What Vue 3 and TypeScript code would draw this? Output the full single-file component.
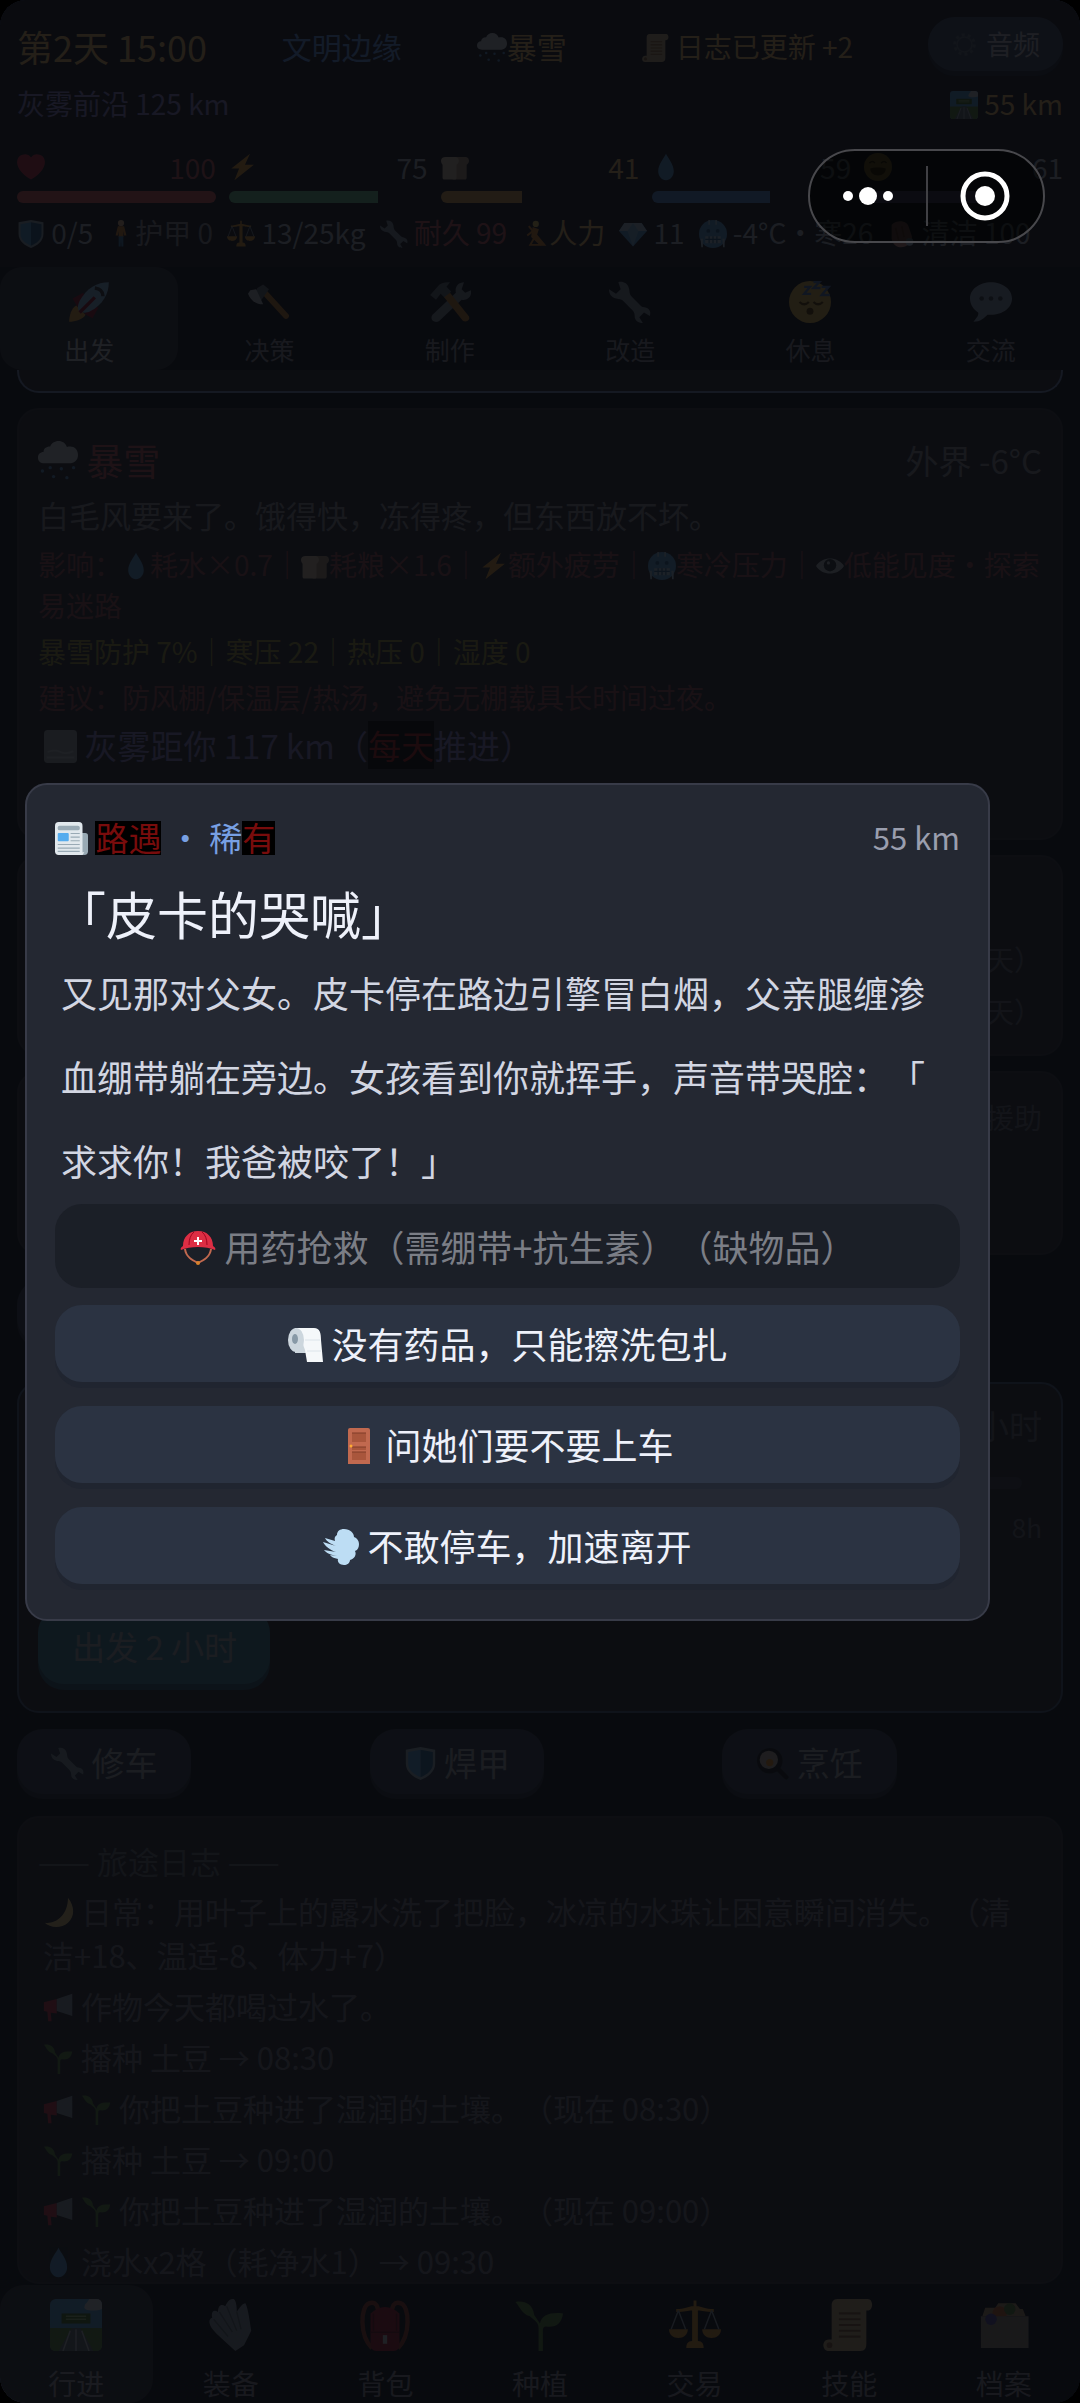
<script setup lang="ts">
import { ref } from 'vue'

interface Stat { icon: string; value: number; color: string; tone: string }
interface Info { icon: string; text: string; tone: string }
interface Tab { icon: string; label: string }
interface LogLine { icons: string[]; text: string }
interface Choice { icon: string; text: string; disabled?: boolean }

const stats: Stat[] = [
  { icon: 'heart', value: 100, color: '#f8645e', tone: 'red' },
  { icon: 'bolt', value: 75, color: '#78dc9c', tone: 'soft' },
  { icon: 'bread', value: 41, color: '#f5b455', tone: 'gold' },
  { icon: 'drop', value: 59, color: '#5aa0f0', tone: 'soft' },
  { icon: 'smile', value: 61, color: '#9a86d8', tone: 'soft' },
]

const infos: Info[] = [
  { icon: 'shield', text: ' 0/5', tone: 'soft' },
  { icon: 'person', text: '护甲 0', tone: 'dim' },
  { icon: 'scales', text: ' 13/25kg', tone: 'soft' },
  { icon: 'wrench', text: ' 耐久 99', tone: 'red' },
  { icon: 'rower', text: '人力', tone: 'gold' },
  { icon: 'gem', text: ' 11', tone: 'soft' },
  { icon: 'cold', text: ' -4°C・寒26', tone: 'soft' },
  { icon: 'soap', text: ' 清洁 100', tone: 'soft' },
]

const actions: Tab[] = [
  { icon: 'rocket', label: '出发' },
  { icon: 'axe', label: '决策' },
  { icon: 'tools', label: '制作' },
  { icon: 'wrench', label: '改造' },
  { icon: 'sleep', label: '休息' },
  { icon: 'speech', label: '交流' },
]

const tabs: Tab[] = [
  { icon: 'road', label: '行进' },
  { icon: 'gloves', label: '装备' },
  { icon: 'backpack', label: '背包' },
  { icon: 'seedling', label: '种植' },
  { icon: 'scales', label: '交易' },
  { icon: 'scroll', label: '技能' },
  { icon: 'folder', label: '档案' },
]

const works: Tab[] = [
  { icon: 'wrench', label: '修车' },
  { icon: 'shield', label: '焊甲' },
  { icon: 'cooking', label: '烹饪' },
]

const logs: LogLine[] = [
  { icons: ['moon'], text: '日常：用叶子上的露水洗了把脸，冰凉的水珠让困意瞬间消失。（清洁+18、温适-8、体力+7）' },
  { icons: ['horn'], text: '作物今天都喝过水了。' },
  { icons: ['seedling'], text: '播种 土豆 → 08:30' },
  { icons: ['horn', 'seedling'], text: '你把土豆种进了湿润的土壤。（现在 08:30）' },
  { icons: ['seedling'], text: '播种 土豆 → 09:00' },
  { icons: ['horn', 'seedling'], text: '你把土豆种进了湿润的土壤。（现在 09:00）' },
  { icons: ['drop'], text: '浇水x2格（耗净水1）→ 09:30' },
]

const choices: Choice[] = [
  { icon: 'helmet', text: '用药抢救（需绷带+抗生素）（缺物品）', disabled: true },
  { icon: 'roll', text: '没有药品，只能擦洗包扎' },
  { icon: 'door', text: '问她们要不要上车' },
  { icon: 'dash', text: '不敢停车，加速离开' },
]

const action = ref(0)
const tab = ref(0)
const hours = ref(2)
</script>

<template>
  <svg class="defs" aria-hidden="true">
    <symbol id="heart" viewBox="0 0 36 36"><path fill="#dd2e44" d="M35.9 11.8A9.9 9.9 0 0 0 18 5.700A9.900 9.900 0 0 0 .1 11.800c0 8.700 9 17.500 17.900 22.200 8.900-4.700 17.900-13.500 17.900-22.200z"/></symbol>
    <symbol id="bolt" viewBox="0 0 36 36"><path fill="#ffac33" d="M27 1 3 20h10L7 35l25-20H20.500z"/></symbol>
    <symbol id="bread" viewBox="0 0 36 36"><path fill="#c0a080" d="M5 5h26c4 0 5 3 5 5s-1 4-3 5v17c0 1-1 2-2 2H15V5z"/><path fill="#f0d8b8" d="M6 5h12c4 0 5 3 5 5s-1 4-3 5v17c0 1-1 2-2 2H4c-1 0-2-1-2-2V15c-1-1-2-3-2-5 0-3 2-5 6-5z"/></symbol>
    <symbol id="drop" viewBox="0 0 36 36"><path fill="#5dadec" d="M28 23.500C28 30 23.500 35 18 35S8 30 8 23.500C8 14 16 6 18 1c2 5 10 13 10 22.500z"/></symbol>
    <symbol id="smile" viewBox="0 0 36 36"><circle cx="18" cy="18" r="18" fill="#ffcc4d"/><path fill="#664500" d="M8 20c2-2 18-2 20 0 0 5-4 9-10 9S8 25 8 20z"/><path d="M7 13q4-4 7 0M22 13q4-4 7 0" fill="none" stroke="#664500" stroke-width="2"/></symbol>
    <symbol id="shield" viewBox="0 0 36 36"><path fill="#a9bccb" d="M18 0 2 3v15c0 9 8 15 16 18 8-3 16-9 16-18V3z"/><path fill="#55acee" d="M18 3 4.500 5.500V18c0 7 6 12 13.500 15z"/><path fill="#226699" d="M18 3l13.500 2.500V18c0 7-6 12-13.500 15z"/></symbol>
    <symbol id="person" viewBox="0 0 36 36"><circle cx="18" cy="4" r="4" fill="#ffcc99"/><path fill="#f4902a" d="M14 8h8l3 12h-3l-1-6v8h-6v-8l-1 6h-3z"/><path fill="#4289c1" d="M15 21h6v13h-2.500l-.5-9-.5 9H15z"/></symbol>
    <symbol id="scales" viewBox="0 0 36 36"><path fill="#ffac33" d="M17 1h2v4c4 0 6 2 12 2v2c-6 0-8-1-11-1v21c3 0 4 2 4 5H12c0-3 1-5 4-5V8c-3 0-5 1-11 1V7c6 0 8-2 12-2zM0 21h13c0 4-3 6-6.500 6S0 25 0 21zm23 0h13c0 4-3 6-6.500 6S23 25 23 21z"/><path d="m6.500 8-5 13m5-13 5 13m18-13-5 13m5-13 5 13" stroke="#9db2c2" fill="none"/></symbol>
    <symbol id="wrench" viewBox="0 0 36 36"><path fill="#8899a6" d="M8 1c4-1 8 1 9 5 1 3 0 5 3 8l7 7c2 2 3 1 5 2 3 1 4 4 3 7l-5-3-4 4 3 5c-4 0-7-2-7-6 0-3-1-4-3-6l-7-7c-2-2-3-1-6-2-4-1-6-4-6-8l6 4 4-4z"/></symbol>
    <symbol id="rower" viewBox="0 0 36 36"><circle cx="19" cy="5" r="4" fill="#ffdc5d"/><path fill="#f4902a" d="m15 9 8 3-3 9 8 9-3 3-12-11z"/><path d="m17 13-9 7M10 8l20 24H12l5-9" fill="none" stroke="#f4902a" stroke-width="2.500"/></symbol>
    <symbol id="gem" viewBox="0 0 36 36"><path fill="#5dadec" d="M7 4h22l7 10-18 20L0 14z"/><path fill="#bdddf4" d="M7 4h22l7 10H0z"/><path fill="#8ccaf7" d="m18 4-7 10 7 20 7-20z"/></symbol>
    <symbol id="cold" viewBox="0 0 36 36"><circle cx="18" cy="18" r="18" fill="#5dadec"/><path fill="#bdddf4" d="M8 21h20v9H8zM2 24h3v11H3zm28 0h3v11h-2zM12 0h2v6h-2zm9 0h2v6h-2z"/><path d="M8 25h20M13 21v9m5-9v9m5-9v9" stroke="#226699" stroke-width="1.500"/><circle cx="12" cy="14" r="2.500" fill="#226699"/><circle cx="24" cy="14" r="2.500" fill="#226699"/></symbol>
    <symbol id="soap" viewBox="0 0 36 36"><path fill="#e89a8a" d="M6 6c8-7 20-5 22 3l4 12c1 8-6 14-14 14-6 0-11-4-12-11z"/><path d="m11 10 4 16m4-18 3 14" stroke="#c1694f" stroke-width="2"/><circle cx="29" cy="28" r="5" fill="#bdddf4"/></symbol>
    <symbol id="snow" viewBox="0 0 36 36"><path fill="#e1e8ed" d="M29 5c-1 0-2 0-3 .5C25 2 22 0 18.500 0 15 0 12 2 11 5 7 5 5 7 5 10c-3 0-5 2-5 5s2 5 6 5h22c5 0 8-3 8-7.500S33 5 29 5z"/><g fill="#5a9fe0"><circle cx="4" cy="27" r="1.500"/><circle cx="11" cy="24" r="1.500"/><circle cx="14" cy="32" r="1.500"/><circle cx="21" cy="25" r="1.500"/><circle cx="26" cy="33" r="1.500"/><circle cx="32" cy="24" r="1.500"/></g></symbol>
    <symbol id="scroll" viewBox="0 0 36 36"><path fill="#e0c48a" d="M10 0h21c4 0 4 8 0 8h-1v23c0 3-1 5-4 5H4c-5 0-5-8 0-8h2V5c0-3 1-5 4-5z"/><path d="M11 10h15M11 14h15m-15 4h15m-15 4h15m-15 4h15" stroke="#9a6a3a" stroke-width="1.500"/><circle cx="4.500" cy="32" r="2" fill="#9a6a3a"/></symbol>
    <symbol id="gear" viewBox="0 0 36 36"><circle cx="18" cy="18" r="13" fill="none" stroke="#55626c" stroke-width="4" stroke-dasharray="4 4.160"/><circle cx="18" cy="18" r="10" fill="none" stroke="#55626c" stroke-width="2"/></symbol>
    <symbol id="road" viewBox="0 0 36 36"><rect width="36" height="36" rx="4" fill="#55acee"/><path fill="#5c913b" d="M0 20h36v12q0 4-4 4H4q-4 0-4-4z"/><path fill="#66757f" d="M15 20h6l9 16H6z"/><path d="M18 21v15M14 22 9 36m13-14 5 14" stroke="#ccd6dd"/><path fill="#3e721d" d="M8 10h20v7H8z"/><path d="M11 12h14M11 14h14" stroke="#a6d388"/><path fill="#e1e8ed" d="M27 0h5q4 0 4 4v3c-5 2-14 1-12-2 0-2 2-2 3-5z"/></symbol>
    <symbol id="rocket" viewBox="0 0 36 36"><path fill="#a0041e" d="m4 15 9-5 2 5-7 7zm17 17 5-9-5-2-7 7z"/><path fill="#ffac33" d="M7 21c-4 2-6 9-6 14 5 0 12-2 14-6z"/><path fill="#8cc8f4" d="M35 1C25 1 16 6 10 17c-2 4-2 8 0 9s5 2 9 0C30 20 35 11 35 1z"/><path fill="#a0041e" d="M22 13 9 26l2 2 13-13z"/><path d="M23 6q7 1 7 7" fill="none" stroke="#292f33" stroke-width="3"/></symbol>
    <symbol id="axe" viewBox="0 0 36 36"><path fill="#d98a2b" d="m15 7 20 22c1 2-2 5-4 3L11 10z"/><path fill="#66757f" d="m8 6 5-3 5 4-7 10-6-4z"/><path fill="#ccd6dd" d="M2 8 7 7l6 13c-7 0-11-4-13-9z"/></symbol>
    <symbol id="tools" viewBox="0 0 36 36"><path fill="#8899a6" d="m3 29 20-19c-1-5 2-9 7-9l-2 6 3 3 5-2c1 6-4 9-8 8L9 34c-4 3-9-1-6-5z"/><path fill="#66757f" d="M1 12 9 3c3-2 6-2 9-2l-3 4 4 4-5 6-4-4-4 5z"/><path fill="#d98a2b" d="m13 14 5-4 16 20c2 3-2 6-5 4z"/></symbol>
    <symbol id="sleep" viewBox="0 0 36 36"><circle cx="18" cy="18" r="18" fill="#ffcc4d"/><path d="M9 18q4 4 8 0m4 0q4 4 8 0" fill="none" stroke="#664500" stroke-width="2"/><circle cx="18" cy="26" r="3" fill="#664500"/><path d="M13 5h5l-5 6h6M21 1h5l-5 5h6M28 5h6l-6 7h7" stroke="#5580c8" stroke-width="2" fill="none"/></symbol>
    <symbol id="speech" viewBox="0 0 36 36"><path fill="#9ab0c8" d="M18 1C8 1 0 7 0 15c0 6 4 10 7 12 1 3-3 6-4 8 6 0 9-3 12-6h3c10 0 18-6 18-14S28 1 18 1z"/><g fill="#3a4654"><circle cx="10" cy="15" r="2"/><circle cx="18" cy="15" r="2"/><circle cx="26" cy="15" r="2"/></g></symbol>
    <symbol id="eye" viewBox="0 0 36 36"><path fill="#c8d0d6" d="M0 18C8 5 28 5 36 18c-8 13-28 13-36 0z"/><circle cx="18" cy="17" r="8" fill="#292f33"/><circle cx="16" cy="14" r="2" fill="#d0d8de"/></symbol>
    <symbol id="fog" viewBox="0 0 36 36"><rect width="36" height="36" rx="4" fill="#aab2b8"/><path d="M4 24q8-3 14 0t14-1M3 30h30" stroke="#ccd6dd" stroke-width="2" fill="none"/></symbol>
    <symbol id="news" viewBox="0 0 36 36"><path fill="#99aab5" d="M28 12h5q3 0 3 3v17q0 4-4 4h-4z"/><rect width="30" height="36" rx="4" fill="#e1e8ed"/><path fill="#e1e8ed" d="M4 33h28l-2 3H4z"/><rect x="3" y="4" width="24" height="5" rx="2" fill="#99aab5"/><rect x="3" y="12" width="12" height="9" rx="1" fill="#55acee"/><path d="M17 12.500h10M17 16.500h10M17 20.500h10M3 24.500h24M3 28.500h24M3 32h24" stroke="#99aab5" stroke-width="1.200"/></symbol>
    <symbol id="helmet" viewBox="0 0 36 36"><path d="M5 19c1 8 7 11 13 14 6-3 12-6 13-14" fill="none" stroke="#c1694f" stroke-width="2"/><circle cx="18" cy="33" r="2" fill="#d9822b"/><path fill="#dd2e44" d="M3 16C3 7 9 1 18 1s15 6 15 15c2 1 3 3 2 4-9-4-25-4-34 0-1-1 0-3 2-4z"/><path d="M9 15Q9 6 14 2m13 13q0-9-5-13" stroke="#a0041e" fill="none"/><path fill="#fff" d="M17 7h2v3h3v2h-3v3h-2v-3h-3v-2h3z"/></symbol>
    <symbol id="roll" viewBox="0 0 36 36"><path fill="#ccd6dd" d="M8 1h18v25H8z"/><path fill="#f5f8fa" d="M10 1h17c6 0 7 5 7 12l2 22H20l-2-12z"/><ellipse cx="9" cy="13" rx="8" ry="12" fill="#ccd6dd"/><ellipse cx="8" cy="12" rx="3" ry="5" fill="#8899a6"/><path d="M18 13h15M20 24h14" stroke="#dce4ea"/></symbol>
    <symbol id="door" viewBox="0 0 36 36"><path fill="#c1694f" d="M9 0h18q2 0 2 2v34H7V2q0-2 2-2z"/><path d="M11 5h14v9H11zm0 14h14v3H11zm0 5h14v8H11z" fill="#a9563c"/><path d="M11 5h14M11 19h14M11 24h14" stroke="#803d28"/><circle cx="10" cy="18" r="1.500" fill="#ffac33"/></symbol>
    <symbol id="dash" viewBox="0 0 36 36"><path fill="#bdddf4" d="M21 0c6 0 10 4 10 8 3 1 5 4 5 7s-1 6-4 7c2 4-1 8-5 9 0 3-3 5-6 5-4 0-7-3-6-6-4-1-7-2-8-4l7 1c-6-1-11-3-13-6l12 2C7 21 2 17 0 13l13 4c-5-2-10-5-11-8l10 3c-1-3 0-5 2-6 0-4 3-6 7-6z"/></symbol>
    <symbol id="cooking" viewBox="0 0 36 36"><path d="m24 24 9 9" stroke="#050608" stroke-width="5" stroke-linecap="round"/><circle cx="15" cy="15" r="14" fill="#050608"/><circle cx="14" cy="14" r="10" fill="#c8b8a0"/><circle cx="15" cy="17" r="4" fill="#f4900c"/></symbol>
    <symbol id="moon" viewBox="0 0 36 36"><path fill="#ffd983" d="M29 1c8 10 8 22 0 29S8 36 2 30c12 2 27-8 27-29z"/></symbol>
    <symbol id="horn" viewBox="0 0 36 36"><path fill="#dd2e44" d="m1 12 15-4v17l-7-1 1 10H6L5 23l-4-1z"/><path fill="#99aab5" d="M16 8 34 2v26L16 22z"/></symbol>
    <symbol id="seedling" viewBox="0 0 36 36"><path fill="#5c913b" d="M17 36V20c0-4-3-5-6-8C5 10 4 5 1 2c6-1 12 1 13 9l4 6c1-6 7-8 16-7-1 7-5 10-12 9-2 0-2 2-2 4v13z"/></symbol>
    <symbol id="gloves" viewBox="0 0 36 36"><path fill="#9aaab8" d="M20 0c2 2 2 7 2 9 2-3 4-6 6-6 2 4 3 13 4 19l-5 10-6 4L8 24C2 18 2 14 5 13c-1-4 1-6 4-4 0-4 2-6 5-4 2-4 3-5 6-5z"/><path d="m6 14 10 12M10 9l9 14m-4-18 7 17m0-13 3 12" stroke="#66757f" fill="none"/></symbol>
    <symbol id="backpack" viewBox="0 0 36 36"><path d="M9 34C0 25 1 5 7 3s6 4 7 8m13 23c9-9 8-29 2-31s-6 4-7 8" fill="none" stroke="#a8442f" stroke-width="3"/><path fill="#be1931" d="M8 10c6-6 14-6 20 0v21q0 5-4 5H12q-4 0-4-5z"/><path d="M8 23h20M10 10v12m16-12v12" stroke="#7a1022"/><path d="M18 25v6" stroke="#e1e8ed" stroke-width="3"/></symbol>
    <symbol id="folder" viewBox="0 0 36 36"><path fill="#c9a875" d="M5 6h7l2-3h12l3 4h2l2 5H3z"/><circle cx="15" cy="10" r="5" fill="#dd6b2e"/><circle cx="22" cy="7" r="4" fill="#5c913b"/><path fill="#a8998a" d="M2 12h33v22H2z"/><circle cx="9" cy="14" r="4" fill="#5b50b8"/></symbol>
  </svg>

  <div class="app">
    <header class="head">
      <div class="row top">
        <span class="day gold">第2天 15:00</span>
        <span class="t30 blue">文明边缘</span>
        <span class="t30 gold"><svg class="ic"><use href="#snow" /></svg>暴雪</span>
        <span class="gold"><svg class="ic"><use href="#scroll" /></svg> 日志已更新 +2</span>
        <button type="button" class="audio"><svg class="ic"><use href="#gear" /></svg>音频</button>
      </div>
      <div class="row front">
        <span class="purple">灰雾前沿 125 km</span>
        <span class="gold"><svg class="ic"><use href="#road" /></svg> 55 km</span>
      </div>
      <div class="stats">
        <div v-for="s in stats" :key="s.icon">
          <div class="row stat" :class="s.tone"><svg class="ic"><use :href="'#' + s.icon" /></svg>{{ s.value }}</div>
          <div class="bar"><div class="fill" :style="{ width: s.value + '%', background: s.color }"></div></div>
        </div>
      </div>
      <div class="infos">
        <span v-for="i in infos" :key="i.icon" :class="i.tone"><svg class="ic"><use :href="'#' + i.icon" /></svg>{{ i.text }}</span>
      </div>
    </header>

    <nav class="actions">
      <button v-for="(a, i) in actions" :key="a.label" type="button" :class="{ on: i === action }" @click="action = i">
        <svg class="glyph"><use :href="'#' + a.icon" /></svg>{{ a.label }}
      </button>
    </nav>

    <main class="body">
      <section class="card peek"></section>

      <section class="card weather">
        <div class="row wtop">
          <h2 class="red"><svg class="ic"><use href="#snow" /></svg> 暴雪</h2>
          <span class="t33 dim">外界 -6°C</span>
        </div>
        <p class="desc dim">白毛风要来了。饿得快，冻得疼，但东西放不坏。</p>
        <p class="effect rose">影响：<svg class="ic"><use href="#drop" /></svg>耗水×0.7｜<svg class="ic"><use href="#bread" /></svg>耗粮×1.6｜<svg class="ic"><use href="#bolt" /></svg>额外疲劳｜<svg class="ic"><use href="#cold" /></svg>寒冷压力｜<svg class="ic"><use href="#eye" /></svg>低能见度・探索易迷路</p>
        <p class="line olive">暴雪防护 7%｜寒压 22｜热压 0｜湿度 0</p>
        <p class="line rose">建议：防风棚/保温层/热汤，避免无棚载具长时间过夜。</p>
        <p class="fog t33 purple"><svg class="ic"><use href="#fog" /></svg> 灰雾距你 117 km（<mark>每天</mark>推进）</p>
      </section>

      <section class="card tasks faint"><p>天）</p><p>天）</p></section>
      <section class="card aid faint"><p>援助</p></section>
      <div class="hidden-row"><button type="button" class="pill" aria-label="更多"></button></div>

      <section class="card travel">
        <label class="t33 faint" for="hours">小时</label>
        <input id="hours" v-model.number="hours" type="range" min="1" max="8" />
        <p class="max faint">8h</p>
        <button type="button" class="pill go">出发 {{ hours }} 小时</button>
      </section>

      <div class="works">
        <div v-for="w in works" :key="w.label">
          <button type="button" class="pill"><svg class="ic"><use :href="'#' + w.icon" /></svg> {{ w.label }}</button>
        </div>
      </div>

      <section class="card log">
        <h3>—— 旅途日志 ——</h3>
        <p v-for="(l, i) in logs" :key="i"><template v-for="n in l.icons" :key="n"><svg class="ic"><use :href="'#' + n" /></svg>{{ ' ' }}</template>{{ l.text }}</p>
      </section>
    </main>

    <nav class="tabs">
      <button v-for="(t, i) in tabs" :key="t.label" type="button" :class="{ on: i === tab }" @click="tab = i">
        <svg class="glyph"><use :href="'#' + t.icon" /></svg>{{ t.label }}
      </button>
    </nav>

    <div class="mask">
      <div class="modal" role="dialog" aria-modal="true" aria-labelledby="event-title">
        <div class="row mhead">
          <span class="kind"><svg class="ic"><use href="#news" /></svg> <mark>路遇</mark> ・ 稀<mark>有</mark></span>
          <span class="dist">55 km</span>
        </div>
        <h1 id="event-title">「皮卡的哭喊」</h1>
        <p class="story">又见那对父女。皮卡停在路边引擎冒白烟，父亲腿缠渗血绷带躺在旁边。女孩看到你就挥手，声音带哭腔：「求求你！我爸被咬了！」</p>
        <div class="choices">
          <button v-for="c in choices" :key="c.icon" type="button" :disabled="c.disabled"><svg class="ic"><use :href="'#' + c.icon" /></svg> {{ c.text }}</button>
        </div>
      </div>
    </div>

    <div class="capsule">
      <button type="button" aria-label="菜单">
        <svg width="50" height="50" viewBox="0 0 50 50" fill="#fff"><circle cx="5" cy="25" r="5" /><circle cx="25" cy="25" r="9" /><circle cx="45" cy="25" r="5" /></svg>
      </button>
      <i></i>
      <button type="button" aria-label="关闭">
        <svg width="50" height="50" viewBox="0 0 50 50"><circle cx="25" cy="25" r="22" fill="none" stroke="#fff" stroke-width="5" /><circle cx="25" cy="25" r="10" fill="#fff" /></svg>
      </button>
    </div>
  </div>
</template>

<style>
body { background: #000; }
</style>

<style scoped>
.defs { position: absolute; width: 0; height: 0; }
.app {
  position: relative;
  display: flex;
  flex-direction: column;
  height: 100vh;
  overflow: hidden;
  border-radius: 26px;
  background: #0d1018;
  color: #9a9ca6;
  font-family: "Noto Sans CJK SC", sans-serif;
  font-size: 28px;
  line-height: 40px;
  text-spacing-trim: space-all;
}
p, h1, h2, h3 { margin: 0; font-weight: 400; }
button { border: 0; padding: 0; background: none; color: inherit; font: inherit; text-spacing-trim: inherit; white-space: pre; }
.ic { width: 1em; height: 1em; vertical-align: -4px; }
.head .ic, .body .ic, .glyph { opacity: 0.7; }
.row { display: flex; justify-content: space-between; align-items: center; }
.t30 { font-size: 30px; }
.t33 { font-size: 33px; }
.gold { color: #c29a58; }
.blue { color: #5480c2; }
.purple { color: #706aa8; }
.red { color: #9c484e; }
.rose { color: #7c3e44; }
.olive { color: #827a34; }
.soft { color: #8a949e; }
.dim { color: #70727c; }
.faint { color: #50555c; }

.head { padding: 16px 17px 7px; background: #14171f; white-space: pre; }
.top { height: 60px; }
.day { font-size: 36px; }
.audio {
  display: flex;
  justify-content: center;
  align-items: center;
  gap: 8px;
  width: 135px;
  height: 54px;
  margin-bottom: 4px;
  border-radius: 27px;
  background: #343f54;
  box-shadow: 0 5px 0 #1c2432;
  font-size: 27px;
}
.front { height: 54px; }
.stats { display: grid; grid-template-columns: repeat(5, 1fr); gap: 13px; margin-top: 16px; }
.stat { height: 42px; }
.bar { height: 12px; margin-top: 3px; border-radius: 6px; overflow: hidden; }
.fill { height: 100%; opacity: 0.7; }
.infos { display: flex; gap: 14px; height: 57px; line-height: 58px; }

.actions { display: grid; grid-template-columns: repeat(6, 1fr); gap: 2px; background: #0c0f16; }
.actions button, .tabs button { display: flex; flex-direction: column; align-items: center; color: #70737e; }
.actions button { height: 103px; padding-top: 14px; gap: 8px; font-size: 25px; line-height: 36px; border-radius: 22px; }
.actions .glyph { width: 42px; height: 42px; }
.actions .on, .tabs .on { background: #262932; color: #a4a6b0; }
.tabs .on { color: #80838c; }

.body { flex: 1; min-height: 0; overflow: hidden; padding: 0 17px; }
.card { box-sizing: border-box; margin-bottom: 15px; border: 2px solid #282b34; border-radius: 22px; background: #21242c; }
.peek { height: 23px; border-color: #5c7098; border-top: 0; border-radius: 0 0 22px 22px; }
.weather { height: 432px; padding: 24px 19px 0; }
.wtop { height: 52px; }
h2 { font-size: 37px; }
h2 .ic { width: 40px; height: 40px; vertical-align: -5px; }
.desc { font-size: 31px; line-height: 58px; }
.effect { line-height: 41px; }
.line { line-height: 46px; margin-top: 2px; }
.line + .line { margin-top: 0; }
.fog { line-height: 50px; padding-left: 6px; }
mark { background: #000; color: #8a1818; }
.tasks { height: 201px; padding: 76px 19px 0; text-align: right; }
.tasks p { line-height: 52px; }
.aid { height: 184px; padding: 24px 19px 0; text-align: right; }
.hidden-row { margin: 24px 0 25px; height: 78px; }
.pill {
  height: 65px;
  padding: 0 34px;
  border-radius: 26px;
  background: #2a3442;
  box-shadow: 0 5px 0 #1d242e;
  color: #888b94;
  font-size: 33px;
}
.hidden-row .pill { width: 173px; }
.travel { display: flex; flex-direction: column; height: 331px; padding: 15px 19px 20px; border-color: #384c66; margin-bottom: 16px; }
.travel label { align-self: flex-end; line-height: 52px; }
.travel input { appearance: none; height: 12px; margin: 26px 20px 0; border-radius: 6px; background: #2e323c; }
.travel input::-webkit-slider-thumb { appearance: none; width: 36px; height: 36px; border-radius: 18px; background: #5a9fe0; }
.max { text-align: right; font-size: 26px; margin-top: 18px; }
.travel .go { align-self: flex-start; flex: none; width: 232px; height: 77px; margin-top: 60px; background: #346c82; box-shadow: 0 6px 0 #264a5c; }
.works { display: grid; grid-template-columns: repeat(3, 1fr); gap: 12px; height: 70px; margin-bottom: 17px; }
.log { padding: 18px 19px 0; height: 468px; margin: 0; color: #60626c; font-size: 31px; overflow: hidden; }
h3 { font-size: 31px; line-height: 50px; color: #505660; }
.log p { padding: 3px 16px 4px 5px; line-height: 44px; }

.tabs { display: grid; grid-template-columns: repeat(7, 1fr); gap: 2px; height: 118px; background: #0c0f16; }
.tabs button { padding-top: 14px; gap: 12px; border-radius: 24px; line-height: 40px; }
.tabs .glyph { width: 52px; height: 52px; flex: none; }

.mask {
  position: fixed;
  inset: 0;
  display: flex;
  align-items: center;
  padding: 0 90px 0 25px;
  background: rgba(8, 9, 13, 0.85);
  border-radius: 26px;
}
.modal { flex: 1; padding: 25px 28px 28px; border: 2px solid #383b48; border-radius: 22px; background: #242832; color: #d2d6e2; }
.mhead { height: 54px; font-size: 33px; white-space: pre; }
.kind { color: #78a0e4; }
.kind mark { background: linear-gradient(#000, #000) center 62% / 100% 34px no-repeat; color: #780c0c; }
.dist { font-size: 31px; color: #9a9eae; }
h1 { padding-top: 12px; font-size: 51px; line-height: 74px; color: #eef1fa; }
.story { padding: 0 6px 2px; font-size: 36px; line-height: 84px; line-break: anywhere; }
.choices { display: grid; gap: 17px; }
.choices button { height: 77px; margin-bottom: 7px; border-radius: 27px; background: #2b3342; box-shadow: 0 6px 0 #202530; color: #eef1fa; font-size: 36px; }
.choices button:disabled { height: 84px; margin: 0; padding-left: 22px; background: #1b1f27; box-shadow: none; color: #7b7e86; }

.capsule {
  position: fixed;
  top: 149px;
  right: 35px;
  box-sizing: border-box;
  display: grid;
  grid-template-columns: 1fr 2px 1fr;
  align-items: center;
  width: 237px;
  height: 94px;
  border: 2px solid #48484c;
  border-radius: 47px;
  background: rgba(0, 0, 0, 0.5);
}
.capsule i { height: 60px; background: #404044; }
.capsule button { height: 50px; line-height: 0; }
</style>
